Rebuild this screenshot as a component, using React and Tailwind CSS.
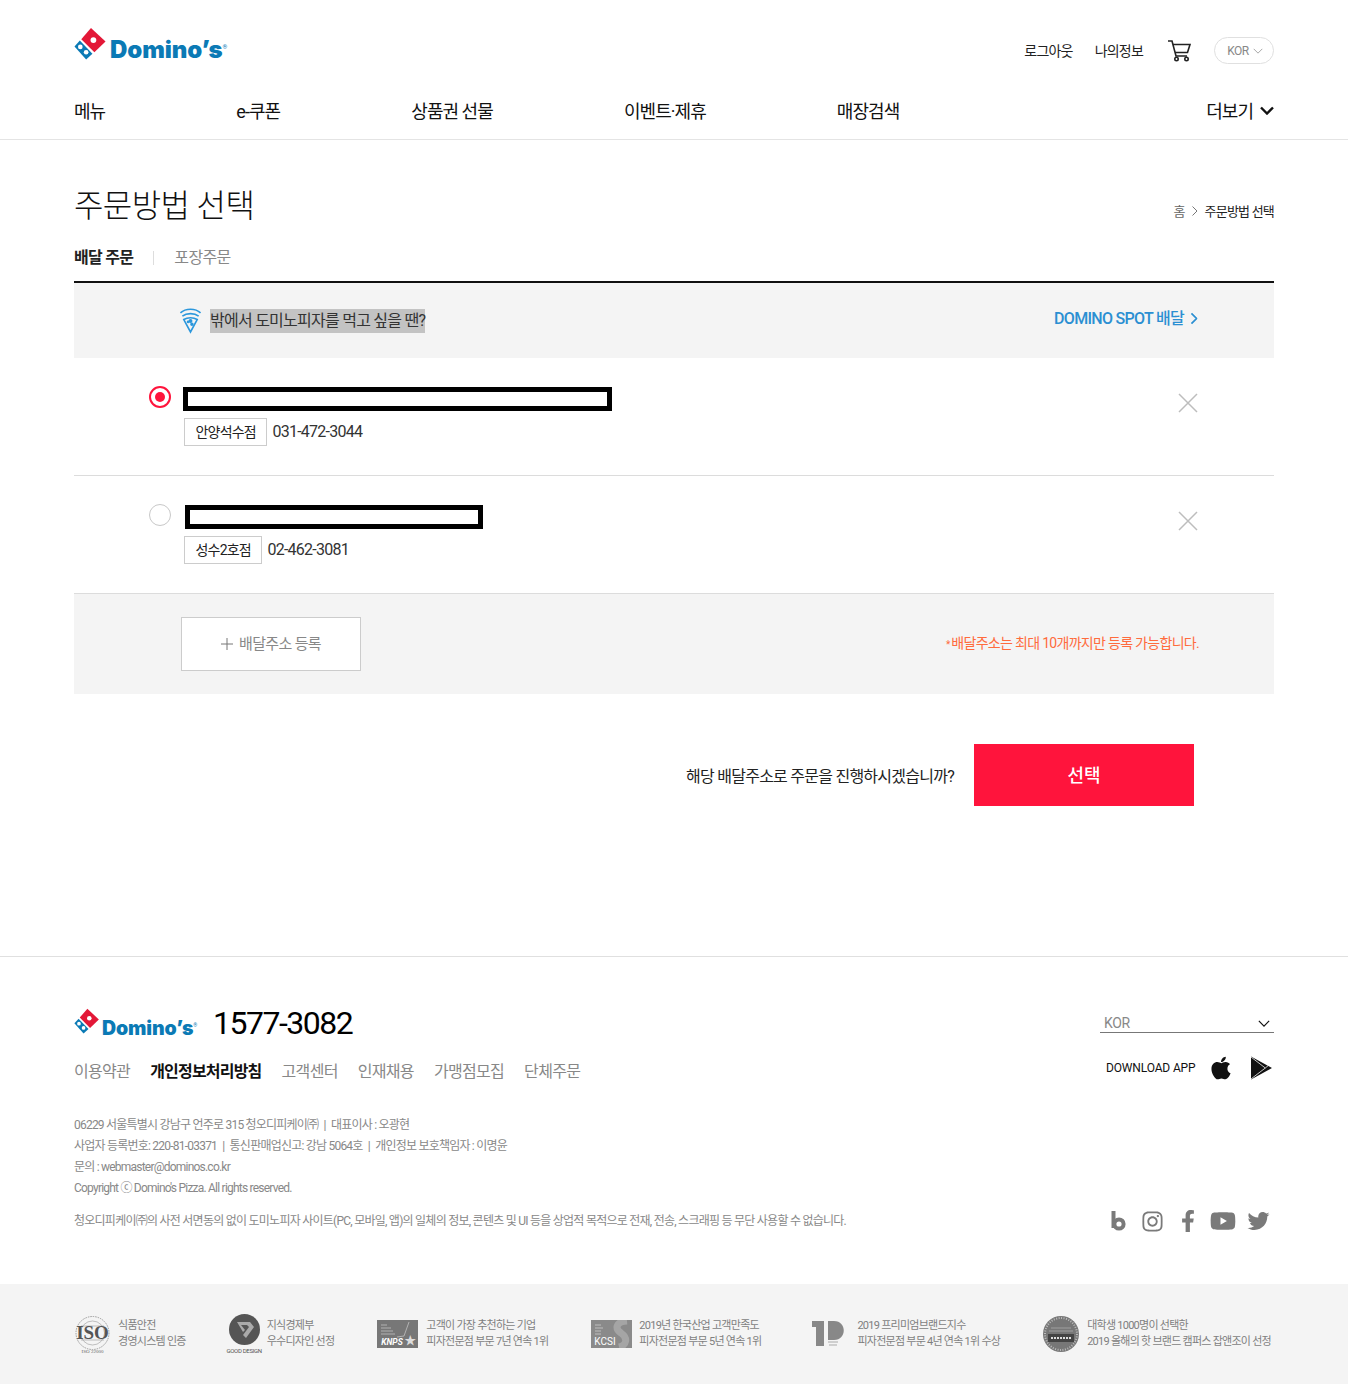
import React from "react";
import { FaApple, FaInstagram, FaFacebookF, FaYoutube, FaTwitter } from "react-icons/fa";

const font = "font-['Roboto','Noto_Sans_CJK_KR',sans-serif]";

function Logo({ small }) {
  return (
    <div className={`flex items-end ${small ? "h-[28px] w-[123px]" : "h-[35px] w-[154px]"}`}>
      <svg viewBox="0 0 34 34" className={small ? "w-[26px] h-[26px] shrink-0 mb-[3px]" : "w-[33px] h-[33px] shrink-0 mb-[2px]"}>
        <path d="M17.5 1 L32.5 15 L21 26 L7.5 12.5 Z" fill="#e31837" />
        <path d="M6 14 L19 27.5 L12.5 33.5 L0.5 20 Z" fill="#0b7ab5" />
        <circle cx="20" cy="13.5" r="3" fill="#fff" />
        <circle cx="6.5" cy="20.5" r="2.4" fill="#fff" />
        <circle cx="12.5" cy="26" r="2.4" fill="#fff" />
      </svg>
      <span className={`font-['Inter',sans-serif] font-black text-[#0b7ab5] leading-none ${small ? "text-[19.5px] ml-[2px] tracking-[-0.1px] mb-[-1px]" : "text-[24px] ml-[3px] tracking-[-0.1px]"}`}>
        Domino’s
      </span>
      <span className={`text-[#0b7ab5] leading-none ${small ? "text-[5px] mb-[9px]" : "text-[6px] mb-[12px]"}`}>®</span>
    </div>
  );
}

function Chevron({ className, w = 2 }) {
  return (
    <svg viewBox="0 0 14 8" className={className} fill="none" stroke="currentColor" strokeWidth={w}>
      <path d="M1 1 L7 7 L13 1" />
    </svg>
  );
}

function Cross() {
  return (
    <svg viewBox="0 0 20 20" className="w-[20px] h-[20px] text-[#bdbdbd]" fill="none" stroke="currentColor" strokeWidth="1.5">
      <path d="M1 1 L19 19 M19 1 L1 19" />
    </svg>
  );
}

function AddressRow({ selected, boxClass, store, phone, border }) {
  return (
    <div className={`flex items-start justify-between pl-[75px] pr-[76px] pt-[29px] h-[118px] ${border ? "border-b border-[#dcdcdc]" : ""}`}>
      <div className="flex items-start">
        {selected ? (
          <div className="w-[22px] h-[22px] mt-[-1px] rounded-full border-2 border-[#ff143c] flex items-center justify-center">
            <div className="w-[10px] h-[10px] rounded-full bg-[#ff143c]" />
          </div>
        ) : (
          <div className="w-[22px] h-[22px] mt-[-1px] rounded-full border border-[#c8c8c8]" />
        )}
        <div className={selected ? "ml-[12px]" : "ml-[14px]"}>
          <div className={`border-[5px] border-black h-[24px] ${boxClass}`} />
          <div className={`flex items-center mt-[7px] ${selected ? "ml-[1px]" : "ml-[-1px]"}`}>
            <span className="h-[28px] px-[10.5px] border border-[#ccc] flex items-center text-[14px] tracking-[-0.8px] text-[#222]">{store}</span>
            <span className="ml-[5px] text-[16px] tracking-[-0.75px] text-[#333]">{phone}</span>
          </div>
        </div>
      </div>
      <div className="mt-[6px]"><Cross /></div>
    </div>
  );
}

function Award({ icon, lines, gap = "ml-[7px]", className = "" }) {
  return (
    <div className={`flex items-center shrink-0 ${className}`}>
      {icon}
      <div className={`${gap} text-[11px] leading-[16px] tracking-[-0.74px] text-[#7f7f7f] whitespace-nowrap`}>
        <div>{lines[0]}</div>
        <div>{lines[1]}</div>
      </div>
    </div>
  );
}

export default function App() {
  return (
    <div className={`${font} bg-white text-[#111] w-full`}>
      {/* header */}
      <header className="border-b border-[#e4e4e4] h-[140px]">
        <div className="w-[1200px] ml-[74px]">
          <div className="flex justify-between items-start h-[90px]">
            <div className="pt-[27px]"><Logo /></div>
            <div className="flex items-center pt-[37px] text-[14px] tracking-[-0.8px] text-[#222]">
              <span className="mt-[1px]">로그아웃</span>
              <span className="ml-[22px] mt-[1px]">나의정보</span>
              <svg viewBox="0 0 24 22" className="w-[24px] h-[22px] ml-[24px]" fill="none" stroke="#222" strokeWidth="1.6">
                <path d="M1 1 H5 L9 16 H20" />
                <path d="M6 4.5 H23 L20.5 12.5 H8" />
                <circle cx="9.5" cy="19" r="1.7" />
                <circle cx="19.5" cy="19" r="1.7" />
              </svg>
              <div className="ml-[23px] w-[60px] h-[27px] rounded-full border border-[#e0e0e0] flex items-center justify-center pl-[2px] text-[12px] tracking-[-0.5px] text-[#888]">
                <span>KOR</span>
                <Chevron className="w-[10px] h-[6px] ml-[4px] text-[#999]" w={1.2} />
              </div>
            </div>
          </div>
          <nav className="flex items-center justify-between h-[42px] text-[18px] tracking-[-0.95px] text-[#111]">
            <div className="flex gap-[131.1px]">
              <span>메뉴</span>
              <span>e-쿠폰</span>
              <span>상품권 선물</span>
              <span>이벤트·제휴</span>
              <span>매장검색</span>
            </div>
            <div className="flex items-center">
              <span>더보기</span>
              <Chevron className="w-[14px] h-[9px] ml-[7px] mb-[1px] text-[#111]" w={2.4} />
            </div>
          </nav>
        </div>
      </header>

      {/* main */}
      <main className="w-[1200px] ml-[74px] h-[816px]">
        <div className="flex justify-between items-end h-[90px]">
          <h1 className="text-[32px] leading-[46px] mb-[1px] font-light tracking-[-0.6px] text-[#111]">주문방법 선택</h1>
          <div className="flex items-center text-[13px] tracking-[-0.8px] text-[#222] mb-[9px]">
            <span className="text-[#666]">홈</span>
            <svg viewBox="0 0 6 10" className="w-[6px] h-[10px] mx-[7px]" fill="none" stroke="#777" strokeWidth="1"><path d="M0.5 0.5 L5 5 L0.5 9.5" /></svg>
            <span>주문방법 선택</span>
          </div>
        </div>
        <div className="flex items-center h-[53px] pt-[4px] text-[16px] tracking-[-0.7px] border-b-2 border-[#111]">
          <span className="font-bold text-[#222]">배달 주문</span>
          <span className="w-px h-[14px] bg-[#ddd] mx-[20px]" />
          <span className="text-[#888]">포장주문</span>
        </div>

        <div className="bg-[#f4f4f4] h-[75px] flex items-center justify-between pl-[105px] pr-[74px]">
          <div className="flex items-center">
            <svg viewBox="0 0 24 28" className="w-[23px] h-[27px]" fill="none" stroke="#2b97dc" strokeWidth="1.7">
              <path d="M1.5 6 C7 1 17 1 22.5 6" />
              <path d="M3.5 9.5 C8 6 16 6 20.5 9.5" />
              <path d="M5 13 C9 10.5 15 10.5 19 13 L12 26 Z" />
              <circle cx="12" cy="14.5" r="1.2" fill="#2b97dc" />
              <circle cx="9.5" cy="15.5" r="0.6" fill="#2b97dc" />
              <circle cx="13.5" cy="18" r="1" fill="#2b97dc" />
            </svg>
            <span className="ml-[8px] h-[24px] leading-[24px] bg-[#c3c3c3] text-[16px] tracking-[-0.75px] text-[#333] whitespace-nowrap">밖에서 도미노피자를 먹고 싶을 땐?</span>
          </div>
          <div className="flex items-center text-[#2b8fd2] text-[16px] font-medium tracking-[-0.7px] mb-[4px]">
            <span>DOMINO SPOT 배달</span>
            <Chevron className="w-[12px] h-[7px] ml-[4px] -rotate-90" w={2} />
          </div>
        </div>

        <AddressRow selected border boxClass="w-[429px]" store="안양석수점" phone="031-472-3044" />
        <AddressRow boxClass="w-[298px]" store="성수2호점" phone="02-462-3081" border />

        <div className="bg-[#f4f4f4] h-[100px] flex items-center justify-between pl-[107px] pr-[75px]">
          <div className="w-[180px] h-[54px] bg-white border border-[#ccc] flex items-center justify-center text-[15px] tracking-[-0.65px] text-[#888]">
            <svg viewBox="0 0 12 12" className="w-[12px] h-[12px] mr-[6px]" stroke="#777" strokeWidth="1"><path d="M6 0 V12 M0 6 H12" /></svg>
            <span>배달주소 등록</span>
          </div>
          <span className="text-[14px] tracking-[-0.7px] text-[#ff6b3d] mb-[2px]"><span className="text-[10px]">* </span>배달주소는 최대 10개까지만 등록 가능합니다.</span>
        </div>

        <div className="flex items-center justify-end mt-[50px] pr-[80px]">
          <span className="text-[16px] tracking-[-0.75px] text-[#222] mr-[20px] mt-[3px]">해당 배달주소로 주문을 진행하시겠습니까?</span>
          <div className="w-[220px] h-[62px] bg-[#ff143c] flex items-center justify-center text-white text-[18px] font-medium">선택</div>
        </div>
      </main>

      {/* footer */}
      <footer className="border-t border-[#e0e0e0]">
        <div className="w-[1200px] ml-[74px] h-[327px] flex justify-between">
          <div>
            <div className="flex items-center mt-[48px] h-[36px]">
              <Logo small />
              <span className="ml-[16px] text-[32px] font-normal tracking-[-1.5px] text-black leading-none">1577-3082</span>
            </div>
            <div className="flex gap-[20px] mt-[19px] text-[16px] tracking-[-0.68px] text-[#888]">
              <span>이용약관</span>
              <span className="font-bold text-[#111] tracking-[-0.8px]">개인정보처리방침</span>
              <span>고객센터</span>
              <span>인재채용</span>
              <span>가맹점모집</span>
              <span>단체주문</span>
            </div>
            <div className="mt-[31px] text-[12px] leading-[21px] tracking-[-0.78px] text-[#888]">
              <div>06229 서울특별시 강남구 언주로 315 청오디피케이㈜<span className="mx-[3px]"> | </span>대표이사 : 오광현</div>
              <div>사업자 등록번호: 220-81-03371<span className="mx-[3px]"> | </span>통신판매업신고: 강남 5064호<span className="mx-[3px]"> | </span>개인정보 보호책임자 : 이명윤</div>
              <div>문의 : webmaster@dominos.co.kr</div>
              <div>Copyright ⓒ Domino's Pizza. All rights reserved.</div>
            </div>
            <div className="mt-[12px] text-[12px] leading-[21px] tracking-[-0.75px] text-[#888] whitespace-nowrap">
              청오디피케이㈜의 사전 서면동의 없이 도미노피자 사이트(PC, 모바일, 앱)의 일체의 정보, 콘텐츠 및 UI 등을 상업적 목적으로 전재, 전송, 스크래핑 등 무단 사용할 수 없습니다.
            </div>
          </div>
          <div className="w-[174px] flex flex-col">
            <div className="mt-[57px] h-[19px] border-b border-[#777] flex items-center justify-between pl-[4px] pr-[4px] text-[14px] text-[#888] tracking-[-0.4px]">
              <span>KOR</span>
              <Chevron className="w-[12px] h-[7px] text-[#111]" w={1.4} />
            </div>
            <div className="flex items-center mt-[20px] h-[30px]">
              <span className="ml-[6px] text-[12px] tracking-[-0.15px] text-[#111]">DOWNLOAD APP</span>
              <FaApple className="ml-[14px] w-[24px] h-[26px] text-[#111] mb-[1px]" />
              <svg viewBox="0 0 22 24" className="ml-[18px] w-[21px] h-[24px] mb-[1px]">
                <path d="M0 0 L22 12 L0 24 Z" fill="#111" />
                <path d="M0 0.5 L15 12 L0 23.5 M15 12 L18 9.5" fill="none" stroke="#fff" strokeWidth="0.8" />
              </svg>
            </div>
            <div className="flex items-center gap-[13px] mt-[126px] text-[#7a7a7a] pl-[11px] h-[24px]">
              <svg viewBox="0 0 15 20" className="w-[15px] h-[20px]" fill="none" stroke="#7a7a7a" strokeWidth="4">
                <path d="M2.5 0 V17" /><circle cx="8" cy="13" r="4.6" />
              </svg>
              <FaInstagram className="w-[23px] h-[23px] ml-[2px]" />
              <FaFacebookF className="w-[22px] h-[22px]" />
              <FaYoutube className="w-[26px] h-[24px] ml-[-2px]" />
              <FaTwitter className="w-[23px] h-[22px] ml-[-2px]" />
            </div>
          </div>
        </div>

        <div className="bg-[#f4f4f4] h-[100px]">
          <div className="ml-[74px] flex items-center gap-[43px] h-[100px]">
            <Award
              lines={["식품안전", "경영시스템 인증"]}
              icon={
                <div className="relative w-[37px] h-[38px] mt-[2px]">
                  <svg viewBox="0 0 37 38" className="w-[37px] h-[38px]" fill="none" stroke="#999" strokeWidth="1">
                    <circle cx="18.5" cy="17" r="16.5" strokeDasharray="1.5 1" />
                    <circle cx="18.5" cy="17" r="12" strokeWidth="0.6" />
                    <path d="M7 10 H30 M7 24 H30" strokeWidth="0.6" />
                  </svg>
                  <span className="absolute left-0 top-[8px] w-[37px] text-center font-['Liberation_Serif',serif] font-bold text-[19px] leading-[18px] text-[#555]">ISO</span>
                  <span className="absolute left-0 top-[33px] w-[37px] text-center font-['Liberation_Serif',serif] text-[5px] leading-[5px] text-[#666]">ISO 22000</span>
                </div>
              }
            />
            <Award
              lines={["지식경제부", "우수디자인 선정"]}
              icon={
                <div className="w-[31px] flex flex-col items-center">
                  <svg viewBox="0 0 31 31" className="w-[31px] h-[31px]">
                    <circle cx="15.5" cy="15.5" r="15.5" fill="#555" />
                    <path d="M8 8 H21 L25 13 L17 24 L14 21 L20 13 L18 11 H12 L16 16 L14 18 Z" fill="#aaa" />
                  </svg>
                  <span className="text-[6px] leading-[7px] mt-[2px] tracking-[-0.3px] text-[#555] whitespace-nowrap">GOOD DESIGN</span>
                </div>
              }
            />
            <Award
              gap="ml-[8px]"
              lines={["고객이 가장 추천하는 기업", "피자전문점 부문 7년 연속 1위"]}
              icon={
                <div className="relative w-[41px] h-[28px] bg-[#777] overflow-hidden">
                  <svg viewBox="0 0 41 28" className="absolute inset-0 w-[41px] h-[28px]" fill="none" stroke="#ccc" strokeWidth="0.7">
                    <path d="M4 5 H10 M4 8 H14 M4 11 H16 M4 14 H18 M20 17 L27 16 L32 2" />
                  </svg>
                  <span className="absolute left-[4px] bottom-[1px] text-white italic font-bold text-[8.5px] leading-[10px]">KNPS</span>
                  <span className="absolute right-[2px] bottom-[0px] text-[#ddd] text-[12px] leading-[13px]">★</span>
                </div>
              }
            />
            <Award
              lines={["2019년 한국산업 고객만족도", "피자전문점 부문 5년 연속 1위"]}
              icon={
                <div className="relative w-[41px] h-[28px] bg-[#8a8a8a] overflow-hidden">
                  <svg viewBox="0 0 41 28" className="absolute inset-0 w-[41px] h-[28px]" fill="none">
                    <path d="M4 5 H10 M4 8 H12 M4 11 H10 M4 14 H10" stroke="#ccc" strokeWidth="0.8" />
                    <path d="M36 1 C24 2 24 9 30 13 C37 18 36 25 28 27" stroke="#a5a5a5" strokeWidth="7" />
                  </svg>
                  <span className="absolute left-[3px] bottom-[1px] text-white text-[10px] leading-[11px]">KCSI</span>
                </div>
              }
            />
            <Award
              gap="ml-[12px]"
              className="ml-[8px]"
              lines={["2019 프리미엄브랜드지수", "피자전문점 부문 4년 연속 1위 수상"]}
              icon={
                <svg viewBox="0 0 33 32" className="w-[33px] h-[32px]">
                  <rect x="0" y="3" width="12" height="6" fill="#888" />
                  <rect x="4" y="9" width="8" height="19" fill="#888" />
                  <path d="M16 3 H22 C35 3 35 22 22 22 H16 Z" fill="#888" />
                  <path d="M16 24 H26 M17 27 H25" stroke="#aaa" strokeWidth="1" />
                </svg>
              }
            />
            <Award
              gap="ml-[8px]"
              lines={["대학생 1000명이 선택한", "2019 올해의 핫 브랜드 캠퍼스 잡앤조이 선정"]}
              icon={
                <svg viewBox="0 0 36 36" className="w-[36px] h-[36px]">
                  <circle cx="18" cy="18" r="18" fill="#777" />
                  <circle cx="18" cy="18" r="16" fill="none" stroke="#bbb" strokeDasharray="1 1.5" strokeWidth="2" />
                  <path d="M8 12 H28 M6 15 H30" stroke="#aaa" strokeWidth="0.8" />
                  <rect x="5" y="18" width="26" height="8" fill="#444" />
                  <path d="M8 22 H28" stroke="#ddd" strokeWidth="2" strokeDasharray="2 1" />
                </svg>
              }
            />
          </div>
        </div>
      </footer>
    </div>
  );
}
